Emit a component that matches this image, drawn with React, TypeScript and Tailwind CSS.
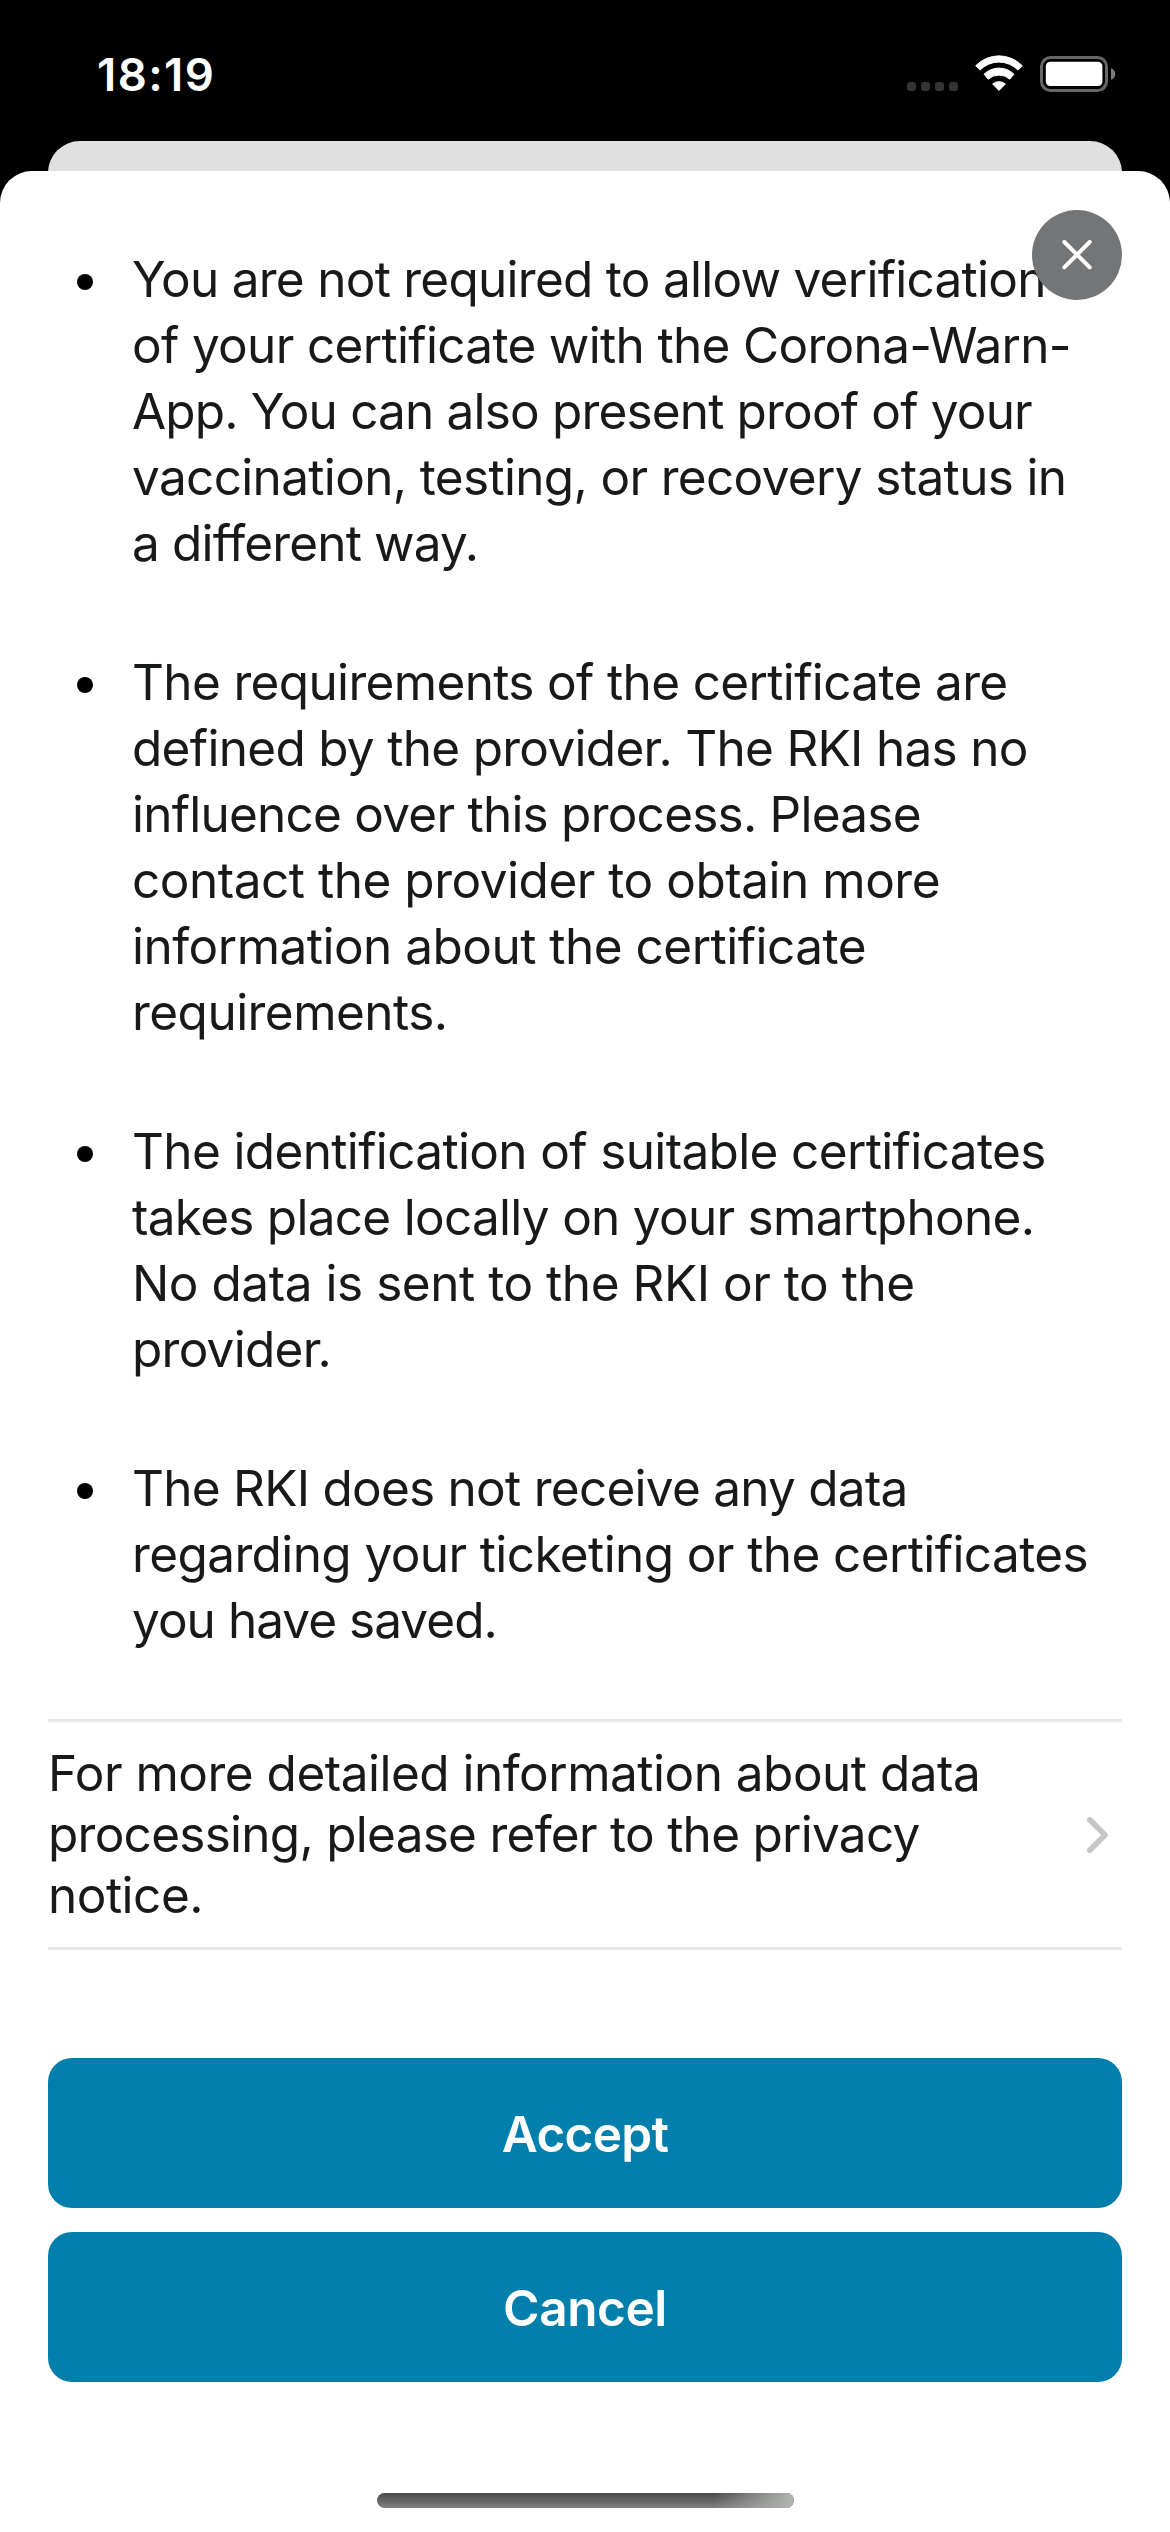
type Line = { text: string; tracking: string };

const points: Line[][] = [
  [
    { text: "You are not required to allow verification", tracking: "tracking-[-0.736px]" },
    { text: "of your certificate with the Corona-Warn-", tracking: "tracking-[-0.675px]" },
    { text: "App. You can also present proof of your", tracking: "tracking-[-0.83px]" },
    { text: "vaccination, testing, or recovery status in", tracking: "tracking-[-0.66px]" },
    { text: "a different way.", tracking: "tracking-[-0.84px]" },
  ],
  [
    { text: "The requirements of the certificate are", tracking: "tracking-[-0.65px]" },
    { text: "defined by the provider. The RKI has no", tracking: "tracking-[-0.7px]" },
    { text: "influence over this process. Please", tracking: "tracking-[-0.767px]" },
    { text: "contact the provider to obtain more", tracking: "tracking-[-0.48px]" },
    { text: "information about the certificate", tracking: "tracking-[-0.51px]" },
    { text: "requirements.", tracking: "tracking-[-0.53px]" },
  ],
  [
    { text: "The identification of suitable certificates", tracking: "tracking-[-0.645px]" },
    { text: "takes place locally on your smartphone.", tracking: "tracking-[-0.72px]" },
    { text: "No data is sent to the RKI or to the", tracking: "tracking-[-0.46px]" },
    { text: "provider.", tracking: "tracking-[-0.74px]" },
  ],
  [
    { text: "The RKI does not receive any data", tracking: "tracking-[-0.74px]" },
    { text: "regarding your ticketing or the certificates", tracking: "tracking-[-0.605px]" },
    { text: "you have saved.", tracking: "tracking-[-0.96px]" },
  ],
];

const privacyLines: Line[] = [
  { text: "For more detailed information about data", tracking: "tracking-[-0.505px]" },
  { text: "processing, please refer to the privacy", tracking: "tracking-[-0.73px]" },
  { text: "notice.", tracking: "tracking-[-0.5px]" },
];

function Lines({ lines }: { lines: Line[] }) {
  return (
    <>
      {lines.map((line) => (
        <span key={line.text} className={`block whitespace-nowrap ${line.tracking}`}>
          {line.text}{" "}
        </span>
      ))}
    </>
  );
}

function StatusBar() {
  return (
    <header className="flex h-[141px] shrink-0 items-start justify-between pr-[54px] pl-[97px] text-white">
      <time className="mt-[47px] text-[45.5px] leading-[56px] font-semibold tracking-[1.4px]">18:19</time>
      <div className="mt-[55px] flex">
        <div className="mt-[27px] mr-[17px] flex gap-[5px]">
          <span className="size-[9px] rounded-[3px] bg-[#343434]" />
          <span className="size-[9px] rounded-[3px] bg-[#343434]" />
          <span className="size-[9px] rounded-[3px] bg-[#343434]" />
          <span className="size-[9px] rounded-[3px] bg-[#343434]" />
        </div>
        <svg className="mr-[17px] h-[37px] w-[48px]" viewBox="0 0 48 37" fill="currentColor" stroke="currentColor" strokeWidth="1" strokeLinejoin="round">
          <path d="M.7 10.8A32.3 32.3 0 0 1 47.3 10.8L43 15.1A26.5 26.5 0 0 0 5 15.1Z" />
          <path d="M9 19.2A21.5 21.5 0 0 1 39 19.2L34.7 24.2A16 16 0 0 0 13.3 24.2Z" />
          <path d="M17.6 29A10 10 0 0 1 30.4 29L24 35.4Z" />
        </svg>
        <svg className="mt-px h-[36px] w-[76px]" viewBox="0 0 76 36">
          <rect x="1.5" y="1.5" width="65" height="33" rx="9" fill="none" stroke="#666" strokeWidth="3" />
          <rect x="5.8" y="5.8" width="56.6" height="24.3" rx="4.5" fill="#fff" />
          <path d="M71 12.2C73.4 13 75.3 15.2 75.3 18S73.4 23 71 23.8Z" fill="#7a7a7a" />
        </svg>
      </div>
    </header>
  );
}

export default function App() {
  return (
    <div className="flex h-[2532px] w-[1170px] flex-col overflow-hidden bg-black font-['Inter',sans-serif] text-[49.5px] text-[#17191a]">
      <StatusBar />
      <div className="mx-12 h-[30px] shrink-0 overflow-hidden">
        <div className="h-[80px] rounded-t-[32px] bg-[#e0e0e0]" />
      </div>
      <main className="relative flex flex-1 flex-col rounded-t-[32px] bg-white px-12 pt-[75px]">
        <ul className="flex flex-col gap-[73px] leading-[66px]">
          {points.map((lines) => (
            <li key={lines[0].text} className="flex pl-[29px]">
              <span className="mt-[28px] mr-[39px] size-[16px] shrink-0 rounded-full bg-black" />
              <p>
                <Lines lines={lines} />
              </p>
            </li>
          ))}
        </ul>

        <a className="mt-[66px] flex h-[231px] items-center justify-between border-y-[3px] border-[#e8e8e8] pr-[13px] leading-[60.7px]">
          <p>
            <Lines lines={privacyLines} />
          </p>
          <svg className="h-[38px] w-[23px]" viewBox="0 0 23 38" fill="none" stroke="#c5c6c8" strokeWidth="5.6" strokeLinecap="round" strokeLinejoin="round">
            <path d="M3.8 3.8L19 19L3.8 34.2" />
          </svg>
        </a>

        <div className="mt-[108px] flex flex-col gap-6 font-semibold text-white">
          <button className="h-[150px] rounded-[24px] bg-[#007fad] pt-[2px] tracking-[-0.7px]">Accept</button>
          <button className="h-[150px] rounded-[24px] bg-[#007fad] pt-[2px] tracking-[-0.4px]">Cancel</button>
        </div>

        <div className="mt-[111px] flex h-[15px] w-[417px] justify-end self-center overflow-hidden rounded-full bg-linear-to-b from-[#4a4a4a] to-[#808080]">
          <div className="w-[80px] bg-linear-to-r from-transparent to-[#b4b7b4]" />
        </div>

        <button aria-label="Close" className="absolute top-[39px] right-12 flex size-[90px] items-center justify-center rounded-full bg-[#747577]">
          <svg className="size-[30px]" viewBox="0 0 30 30" fill="none" stroke="#fff" strokeWidth="4" strokeLinecap="round">
            <path d="M2.3 2L27.7 27.4M27.7 2L2.3 27.4" />
          </svg>
        </button>
      </main>
    </div>
  );
}
